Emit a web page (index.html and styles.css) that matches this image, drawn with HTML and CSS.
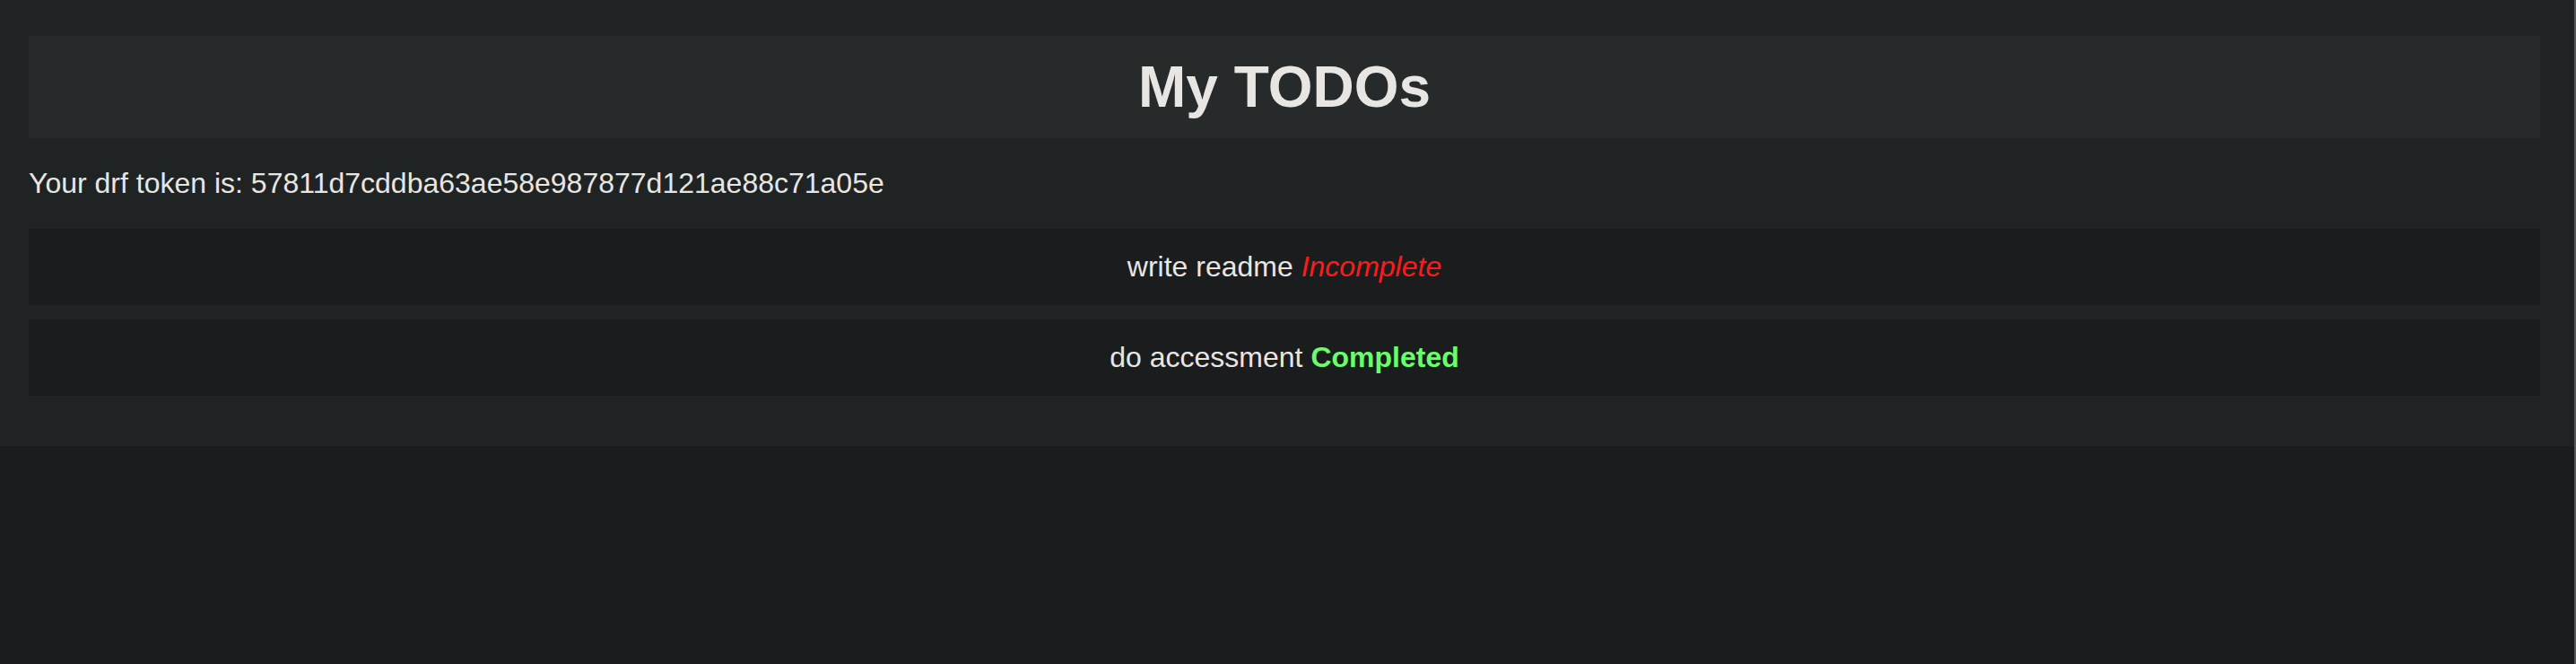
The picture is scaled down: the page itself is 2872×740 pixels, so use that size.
FILE: index.html
```html
<!DOCTYPE html>
<html lang="en">
<head>
<meta charset="utf-8">
<title>My TODOs</title>
<link rel="stylesheet" href="styles.css">
</head>
<body>
<div class="page">
  <main class="app">
    <header class="app-header">
      <h1 class="app-title">My TODOs</h1>
    </header>
    <p class="token">Your drf token is: 57811d7cddba63ae58e987877d121ae88c71a05e</p>
    <ul class="todo-list">
      <li class="todo-item">write readme <em class="status status-incomplete">Incomplete</em></li>
      <li class="todo-item">do accessment <strong class="status status-complete">Completed</strong></li>
    </ul>
  </main>
</div>
</body>
</html>
```
FILE: styles.css
```css
html, body {
  margin: 0;
  padding: 0;
  height: 100%;
}

body {
  background: #1b1c1e;
  color: #e8e6e3;
  font-family: "Liberation Sans", Arial, sans-serif;
  font-size: 32px;
}

.page {
  min-height: 100%;
  border-right: 2px solid #56585a;
  box-sizing: border-box;
}

.app {
  background: #202324;
  padding: 40px 38px 56px 32px;
}

.app-header {
  background: #262a2b;
  padding: 20px 0;
  text-align: center;
}

.app-title {
  margin: 0;
  font-size: 64px;
  font-weight: bold;
  line-height: normal;
}

.token {
  margin: 32px 0 32px;
  line-height: normal;
}

.todo-list {
  list-style: none;
  margin: 0;
  padding: 0;
  display: flex;
  flex-direction: column;
  gap: 16px;
}

.todo-item {
  background: #1b1c1e;
  padding: 24px 0;
  text-align: center;
  line-height: normal;
}

.status-incomplete {
  color: #ff1a1a;
  font-style: italic;
}

.status-complete {
  color: #6afc6a;
  font-weight: bold;
}
```
